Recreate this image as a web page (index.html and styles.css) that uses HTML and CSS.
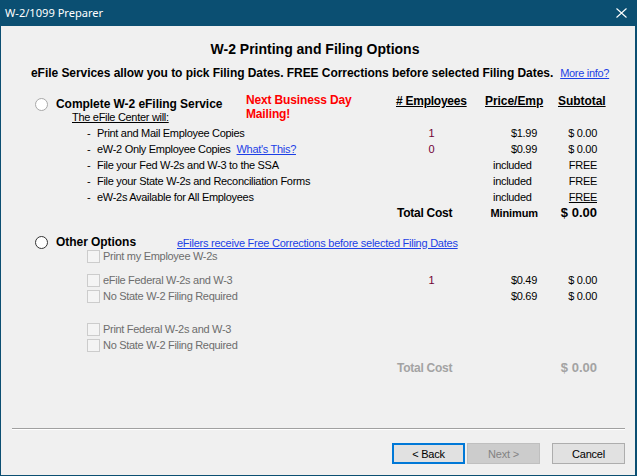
FILE: index.html
```html
<!DOCTYPE html>
<html>
<head>
<meta charset="utf-8">
<link rel="stylesheet" href="styles.css">
</head>
<body>
<div class="window">
  <div class="titlebar">
    <span class="title">W-2/1099 Preparer</span>
    <svg class="close" width="11" height="10" viewBox="0 0 11 10"><path d="M0.5 0.5 L10.5 9.5 M10.5 0.5 L0.5 9.5" stroke="#fff" stroke-width="1.1" fill="none"/></svg>
  </div>
  <div class="content">
    <h1 class="heading">W-2 Printing and Filing Options</h1>
    <p class="intro"><b class="intro-bold">eFile Services allow you to pick Filing Dates. FREE Corrections before selected Filing Dates.</b><a class="link more">More info?</a></p>

    <div class="row row-head">
      <div class="cell-main head-main">
        <div class="opt">
          <div class="opt-line">
            <span class="radio radio-light"></span>
            <span class="opt-label">Complete W-2 eFiling Service</span>
          </div>
          <div class="opt-sub">The eFile Center will:</div>
        </div>
        <div class="red">Next Business Day<br>Mailing!</div>
      </div>
      <div class="hdr hdr-emp">#&nbsp;Employees</div>
      <div class="hdr hdr-price">Price/Emp</div>
      <div class="hdr hdr-sub">Subtotal</div>
    </div>

    <div class="row item">
      <div class="cell-main item-main"><span class="dash">-</span><span>Print and Mail Employee Copies</span></div>
      <div class="num">1</div>
      <div class="price">$1.99</div>
      <div class="subt">$ 0.00</div>
    </div>
    <div class="row item">
      <div class="cell-main item-main"><span class="dash">-</span><span>eW-2 Only Employee Copies</span><a class="link whats">What's This?</a></div>
      <div class="num">0</div>
      <div class="price">$0.99</div>
      <div class="subt">$ 0.00</div>
    </div>
    <div class="row item">
      <div class="cell-main item-main"><span class="dash">-</span><span>File your Fed W-2s and W-3 to the SSA</span></div>
      <div class="num"></div>
      <div class="incl">included</div>
      <div class="subt">FREE</div>
    </div>
    <div class="row item">
      <div class="cell-main item-main"><span class="dash">-</span><span>File your State W-2s and Reconciliation Forms</span></div>
      <div class="num"></div>
      <div class="incl">included</div>
      <div class="subt">FREE</div>
    </div>
    <div class="row item">
      <div class="cell-main item-main"><span class="dash">-</span><span>eW-2s Available for All Employees</span></div>
      <div class="num"></div>
      <div class="incl">included</div>
      <div class="subt"><u>FREE</u></div>
    </div>
    <div class="row item total">
      <div class="cell-main"></div>
      <div class="tot-label">Total Cost</div>
      <div class="tot-min">Minimum</div>
      <div class="tot-val">$ 0.00</div>
    </div>

    <div class="other-line">
      <span class="radio radio-dark"></span>
      <span class="opt-label other-label">Other Options</span>
      <a class="link efilers">eFilers receive Free Corrections before selected Filing Dates</a>
    </div>

    <div class="row cb-row cb-first">
      <div class="cell-main cb-main"><span class="cb"></span><span class="dis">Print my Employee W-2s</span></div>
      <div></div><div></div><div></div>
    </div>
    <div class="row cb-row cb-gap1">
      <div class="cell-main cb-main"><span class="cb"></span><span class="dis">eFile Federal W-2s and W-3</span></div>
      <div class="num">1</div>
      <div class="price">$0.49</div>
      <div class="subt">$ 0.00</div>
    </div>
    <div class="row cb-row">
      <div class="cell-main cb-main"><span class="cb"></span><span class="dis">No State W-2 Filing Required</span></div>
      <div class="num"></div>
      <div class="price">$0.69</div>
      <div class="subt">$ 0.00</div>
    </div>
    <div class="row cb-row cb-gap2">
      <div class="cell-main cb-main"><span class="cb"></span><span class="dis">Print Federal W-2s and W-3</span></div>
      <div></div><div></div><div></div>
    </div>
    <div class="row cb-row">
      <div class="cell-main cb-main"><span class="cb"></span><span class="dis">No State W-2 Filing Required</span></div>
      <div></div><div></div><div></div>
    </div>
    <div class="row item total total-dis">
      <div class="cell-main"></div>
      <div class="tot-label">Total Cost</div>
      <div class="tot-min"></div>
      <div class="tot-val">$ 0.00</div>
    </div>

    <div class="separator"></div>
    <div class="buttons">
      <button class="btn btn-default">&lt; Back</button>
      <button class="btn btn-disabled">Next &gt;</button>
      <button class="btn btn-cancel">Cancel</button>
    </div>
  </div>
</div>
</body>
</html>
```
FILE: styles.css
```css
* { box-sizing: border-box; margin: 0; padding: 0; }
html, body { width: 637px; height: 476px; overflow: hidden; }
body {
  font-family: "Liberation Sans", Arial, sans-serif;
  font-size: 11px;
  color: #000;
  background: #0b4f72;
}
.window {
  width: 637px;
  height: 476px;
  display: flex;
  flex-direction: column;
  background: #0b4f72;
}
.titlebar {
  height: 26px;
  flex: none;
  display: flex;
  align-items: center;
  justify-content: space-between;
  padding: 0 10px 0 5px;
  color: #fff;
  font-family: "Noto Sans", sans-serif;
  font-size: 11.1px;
}
.title { line-height: 16px; }
.close { display: block; }
.content {
  flex: 1;
  margin: 0 2px 1px 1px;
  background: #f0f0f0;
  display: flex;
  flex-direction: column;
  letter-spacing: -0.3px;
}
.heading {
  margin-top: 14px;
  font-size: 14px;
  line-height: 18px;
  font-weight: bold;
  text-align: center;
  padding-right: 6px;
  letter-spacing: 0;
}
.intro {
  margin-top: 8px;
  padding-left: 30px;
  line-height: 14px;
  white-space: nowrap;
  display: flex;
  gap: 7px;
}
.intro-bold { font-weight: bold; font-size: 12px; letter-spacing: -0.05px; }
.link { color: #1c3fe6; text-decoration: underline; }
.efilers { letter-spacing: -0.25px; }

.row {
  display: grid;
  grid-template-columns: 394px 72px 77px 61px;
  white-space: nowrap;
}
.row-head { margin-top: 13px; height: 32px; }
.head-main { display: flex; align-items: flex-start; }
.opt { width: 245px; padding-left: 34px; }
.opt-line {
  margin-top: 5px;
  height: 13px;
  display: flex;
  align-items: center;
  gap: 8px;
}
.opt-label { font-size: 12px; font-weight: bold; letter-spacing: -0.05px; line-height: 13px; }
.opt-sub { margin-left: 37px; line-height: 12px; text-decoration: underline; }
.red { color: #ff0000; font-weight: bold; font-size: 12px; line-height: 14px; letter-spacing: -0.15px; }
.radio {
  width: 13px;
  height: 13px;
  border-radius: 50%;
  background: #fff;
  flex: none;
}
.radio-light { border: 1px solid #a8a8a8; }
.radio-dark { border: 1px solid #333; }
.hdr { margin-top: 1px; line-height: 14px; font-size: 12px; font-weight: bold; text-decoration: underline; letter-spacing: -0.05px; }
.hdr-emp { padding-left: 1px; letter-spacing: -0.25px; }
.hdr-price { padding-left: 18px; }
.hdr-sub { padding-left: 14px; }

.item { height: 16px; line-height: 16px; }
.item-main { display: flex; padding-left: 86px; }
.dash { width: 10px; }
.whats { margin-left: 6px; }
.num { text-align: center; color: #700035; padding-left: 1px; }
.price { text-align: right; padding-right: 7px; }
.incl { padding-left: 26px; }
.subt { text-align: right; padding-right: 8px; }
.tot-label { font-weight: bold; font-size: 12px; padding-left: 2px; letter-spacing: -0.25px; }
.tot-min { font-weight: bold; font-size: 11px; text-align: right; padding-right: 6px; letter-spacing: -0.1px; }
.tot-val { font-weight: bold; font-size: 13px; text-align: right; padding-right: 8px; letter-spacing: 0; }
.total-dis { color: #a3a3a3; margin-top: 7px; }

.other-line {
  margin-top: 15px;
  height: 13px;
  padding-left: 34px;
  display: flex;
  align-items: center;
  gap: 8px;
  white-space: nowrap;
}
.other-label { width: 113px; flex: none; }

.cb-row { height: 16px; line-height: 16px; }
.cb-first { height: 14px; line-height: 14px; }
.cb-gap1 { margin-top: 9px; }
.cb-gap2 { margin-top: 17px; }
.cb-main { display: flex; align-items: center; padding-left: 86px; gap: 3px; }
.cb {
  width: 13px;
  height: 13px;
  border: 1px solid #cccccc;
  background: #f4f4f4;
  flex: none;
}
.dis { color: #6d6d6d; }

.separator {
  margin: 52px 10px 0 11px;
  height: 2px;
  border-top: 1px solid #a0a0a0;
  border-bottom: 1px solid #ffffff;
}
.buttons {
  margin-top: 13px;
  display: flex;
  justify-content: flex-end;
  padding-right: 10px;
}
.btn {
  width: 73px;
  height: 21px;
  font-family: "Liberation Sans", Arial, sans-serif;
  font-size: 11px;
  letter-spacing: -0.2px;
  color: #000;
  background: #e1e1e1;
  border: 1px solid #adadad;
}
.btn-default { border: 2px solid #0078d7; margin-right: 2px; }
.btn-disabled { background: #cccccc; border-color: #bfbfbf; color: #838383; margin-right: 12px; }
```
